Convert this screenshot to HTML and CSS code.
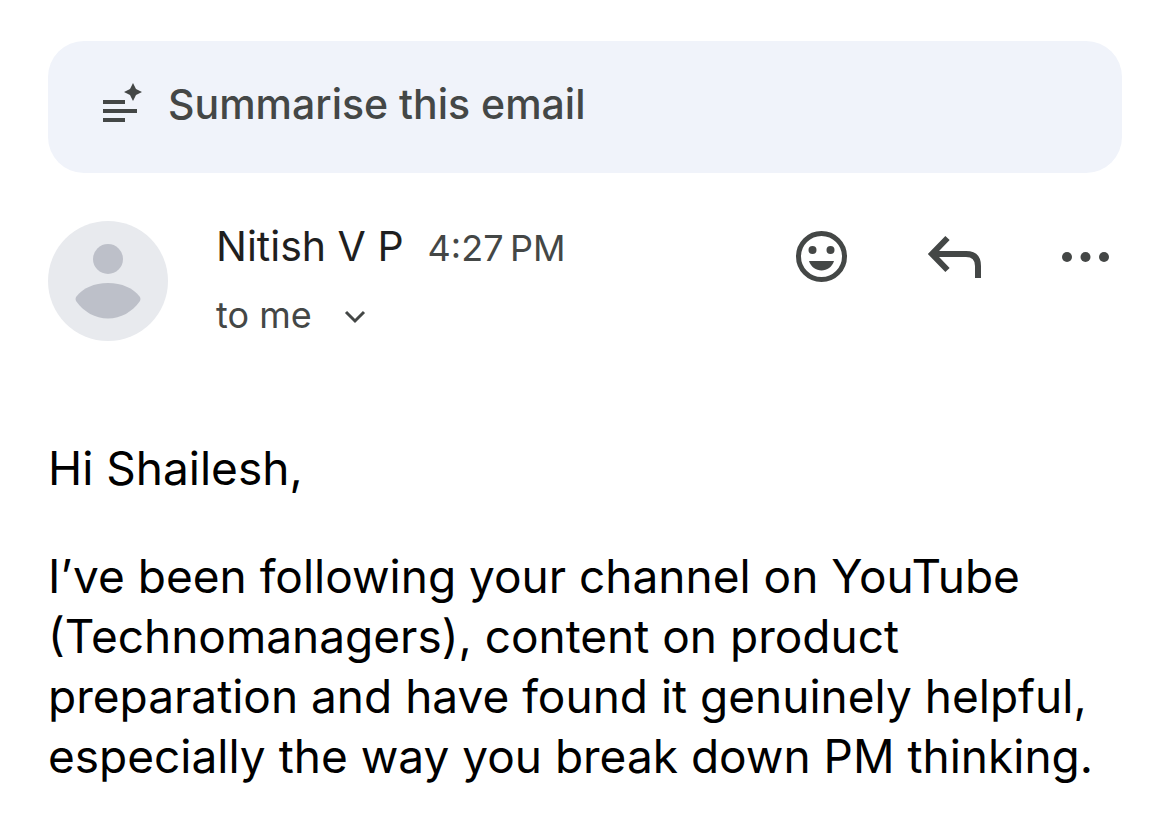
FILE: index.html
```
<!DOCTYPE html>
<html lang="en">
<head>
  <meta charset="UTF-8" />
  <meta name="viewport" content="width=device-width, initial-scale=1.0"/>
  <title>Email from Nitish V P</title>
  <link rel="stylesheet" href="styles.css">
</head>
<body>
  <main class="email">
    <button class="summarise" type="button">
      <svg class="summarise-icon" viewBox="0 0 42 42" aria-hidden="true">
        <path d="M3 19h22M3 28h34M3 37h22" fill="none" stroke="currentColor" stroke-width="4"/>
        <path d="M33 0L36 6L42 9L36 12L33 18L30 12L24 9L30 6Z" fill="currentColor"/>
      </svg>
      Summarise this email
    </button>
    <header class="sender">
      <svg class="avatar" viewBox="0 0 120 120" role="img" aria-label="Nitish V P">
        <circle cx="60" cy="60" r="60" fill="#e8eaee"/>
        <circle cx="60" cy="38" r="15" fill="#bdc0c9"/>
        <path d="M28 76C35 67 46 62 60 62S85 67 92 76Q93 78 92 80C84 91 73 97.500 60 97.500S36 91 28 80Q27 78 28 76Z" fill="#bdc0c9"/>
      </svg>
      <div class="details">
        <div class="name-line">
          <span class="name">Nitish V P</span>
          <time class="time">4:27&#8239;PM</time>
        </div>
        <button class="recipient" type="button">
          to me
          <svg class="chevron" viewBox="0 0 22 18" aria-hidden="true">
            <path d="M2 6l9 9 9-9" fill="none" stroke="currentColor" stroke-width="3"/>
          </svg>
        </button>
      </div>
      <div class="actions">
        <button type="button" aria-label="React">
          <svg viewBox="0 0 56 56">
            <circle cx="27.500" cy="27.500" r="23" fill="none" stroke="currentColor" stroke-width="5"/>
            <circle cx="18.500" cy="21" r="4" fill="currentColor"/>
            <circle cx="36.500" cy="21" r="4" fill="currentColor"/>
            <path d="M15 32h25C38 38 33 41.500 27.500 41.500S17 38 15 32Z" fill="currentColor"/>
          </svg>
        </button>
        <button type="button" aria-label="Reply">
          <svg viewBox="0 0 56 56">
            <path d="M21.500 9L6 25l15.500 16M6 25h34q12 0 12 12v12" fill="none" stroke="currentColor" stroke-width="6"/>
          </svg>
        </button>
        <button type="button" aria-label="More options">
          <svg viewBox="0 0 56 56">
            <circle cx="9" cy="28" r="5" fill="currentColor"/>
            <circle cx="27.500" cy="28" r="5" fill="currentColor"/>
            <circle cx="46" cy="28" r="5" fill="currentColor"/>
          </svg>
        </button>
      </div>
    </header>
    <article class="message">
      <p>Hi Shailesh,</p>
      <p>I’ve been following your channel on YouTube (Technomanagers), content on product preparation and have found it genuinely helpful, especially the way you break down PM thinking.</p>
    </article>
  </main>
</body>
</html>
```
FILE: styles.css
```
* {
  box-sizing: border-box;
}
body {
  margin: 0;
  background: #fff;
  color: #000;
  font-family: Inter, sans-serif;
}
button {
  padding: 0;
  border: none;
  background: none;
  color: inherit;
  font: inherit;
  cursor: pointer;
}
svg {
  display: block;
}
.email {
  padding: 41px 48px 0;
}
.summarise {
  display: flex;
  align-items: center;
  gap: 26px;
  width: 100%;
  height: 132px;
  padding: 0 52px 6px;
  border-radius: 36px;
  background: #f0f3fa;
  color: #444746;
  font-size: 41px;
  font-weight: 500;
}
.summarise-icon {
  width: 42px;
  height: 42px;
}
.sender {
  display: flex;
  align-items: flex-start;
  margin-top: 48px;
}
.avatar {
  width: 120px;
  height: 120px;
}
.details {
  margin-left: 48px;
}
.name-line {
  display: flex;
  align-items: baseline;
  gap: 24px;
  line-height: 50px;
}
.name {
  color: #1f1f1f;
  font-size: 41px;
}
.time {
  color: #444746;
  font-size: 36px;
}
.recipient {
  display: flex;
  align-items: center;
  gap: 32px;
  margin-top: 20px;
  color: #444746;
  font-size: 36px;
  line-height: 44px;
}
.chevron {
  width: 22px;
  height: 18px;
}
.actions {
  display: flex;
  gap: 76px;
  margin: 8px 8px 0 auto;
  color: #444746;
}
.actions svg {
  width: 56px;
  height: 56px;
}
.message {
  margin-top: 97px;
  font-size: 46px;
  line-height: 60px;
}
.message p {
  margin: 0 0 48px;
}
.message p:last-child {
  margin-bottom: 0;
}
```
